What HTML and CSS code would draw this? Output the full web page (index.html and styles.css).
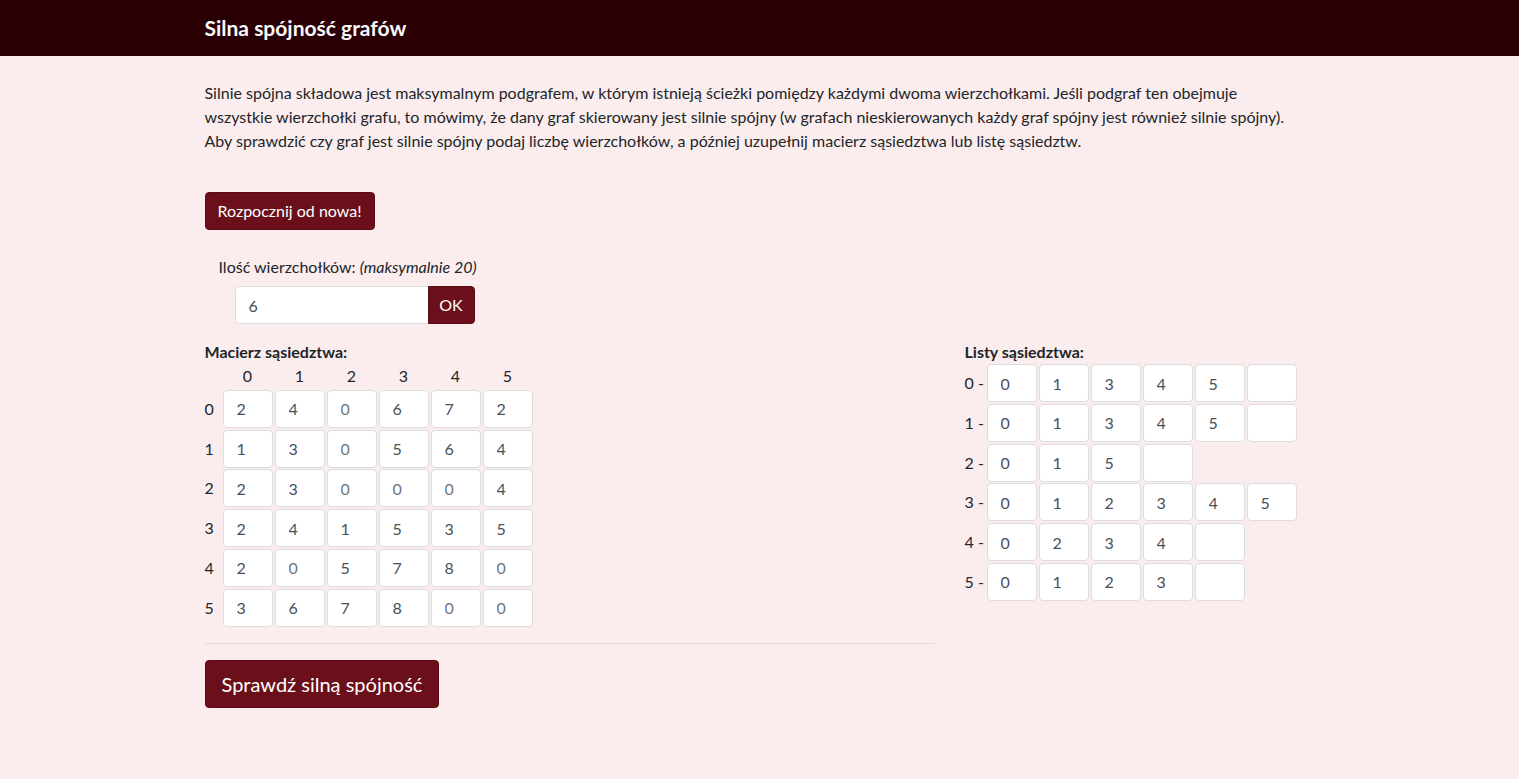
FILE: index.html
```html
<!DOCTYPE html>
<html lang="pl">
<head>
<meta charset="utf-8">
<title>Silna spójność grafów</title>
<link rel="stylesheet" href="styles.css">
</head>
<body>
<header class="topbar">
  <div class="container">
    <h1 class="brand">Silna spójność grafów</h1>
  </div>
</header>
<main class="container content">
  <p class="intro">Silnie spójna składowa jest maksymalnym podgrafem, w którym istnieją ścieżki pomiędzy każdymi dwoma wierzchołkami. Jeśli podgraf ten obejmuje<br>wszystkie wierzchołki grafu, to mówimy, że dany graf skierowany jest silnie spójny (w grafach nieskierowanych każdy graf spójny jest również silnie spójny).<br>Aby sprawdzić czy graf jest silnie spójny podaj liczbę wierzchołków, a później uzupełnij macierz sąsiedztwa lub listę sąsiedztw.</p>

  <button class="btn btn-reset">Rozpocznij od nowa!</button>

  <div class="count-form">
    <label class="count-label">Ilość wierzchołków: <em>(maksymalnie 20)</em></label>
    <div class="input-group">
      <input class="count-input" value="6">
      <button class="btn btn-ok">OK</button>
    </div>
  </div>

  <div class="row">
    <section class="col-matrix">
      <h2 class="sec-title">Macierz sąsiedztwa:</h2>
      <div class="matrix">
        <span></span><span class="head">0</span><span class="head">1</span><span class="head">2</span><span class="head">3</span><span class="head">4</span><span class="head">5</span>

        <span class="rlabel">0</span><input class="cell" value="2"><input class="cell" value="4"><input class="cell" placeholder="0"><input class="cell" value="6"><input class="cell" value="7"><input class="cell" value="2">
        <span class="rlabel">1</span><input class="cell" value="1"><input class="cell" value="3"><input class="cell" placeholder="0"><input class="cell" value="5"><input class="cell" value="6"><input class="cell" value="4">
        <span class="rlabel">2</span><input class="cell" value="2"><input class="cell" value="3"><input class="cell" placeholder="0"><input class="cell" placeholder="0"><input class="cell" placeholder="0"><input class="cell" value="4">
        <span class="rlabel">3</span><input class="cell" value="2"><input class="cell" value="4"><input class="cell" value="1"><input class="cell" value="5"><input class="cell" value="3"><input class="cell" value="5">
        <span class="rlabel">4</span><input class="cell" value="2"><input class="cell" placeholder="0"><input class="cell" value="5"><input class="cell" value="7"><input class="cell" value="8"><input class="cell" placeholder="0">
        <span class="rlabel">5</span><input class="cell" value="3"><input class="cell" value="6"><input class="cell" value="7"><input class="cell" value="8"><input class="cell" placeholder="0"><input class="cell" placeholder="0">
      </div>
      <hr class="divider">
      <button class="btn btn-lg">Sprawdź silną spójność</button>
    </section>

    <section class="col-lists">
      <h2 class="sec-title">Listy sąsiedztwa:</h2>
      <div class="lists">
        <div class="lrow"><span class="llabel">0 -</span><input class="cell" value="0"><input class="cell" value="1"><input class="cell" value="3"><input class="cell" value="4"><input class="cell" value="5"><input class="cell" value=""></div>
        <div class="lrow"><span class="llabel">1 -</span><input class="cell" value="0"><input class="cell" value="1"><input class="cell" value="3"><input class="cell" value="4"><input class="cell" value="5"><input class="cell" value=""></div>
        <div class="lrow"><span class="llabel">2 -</span><input class="cell" value="0"><input class="cell" value="1"><input class="cell" value="5"><input class="cell" value=""></div>
        <div class="lrow"><span class="llabel">3 -</span><input class="cell" value="0"><input class="cell" value="1"><input class="cell" value="2"><input class="cell" value="3"><input class="cell" value="4"><input class="cell" value="5"></div>
        <div class="lrow"><span class="llabel">4 -</span><input class="cell" value="0"><input class="cell" value="2"><input class="cell" value="3"><input class="cell" value="4"><input class="cell" value=""></div>
        <div class="lrow"><span class="llabel">5 -</span><input class="cell" value="0"><input class="cell" value="1"><input class="cell" value="2"><input class="cell" value="3"><input class="cell" value=""></div>
      </div>
    </section>
  </div>
</main>
</body>
</html>
```
FILE: styles.css
```css
* { box-sizing: border-box; }

html, body {
  margin: 0;
  padding: 0;
}

body {
  background: #fbeded;
  color: #212529;
  font-family: Lato, "Open Sans", "Noto Sans", sans-serif;
  font-size: 16px;
  line-height: 24px;
  min-height: 779px;
}

.container {
  width: 1110px;
  margin: 0 auto;
}

.topbar {
  background: #2a0005;
  height: 56px;
  display: flex;
  align-items: center;
}

.brand {
  margin: 0;
  color: #f8f9fa;
  font-size: 21px;
  font-weight: 700;
  line-height: 30px;
}

.content {
  padding-top: 25px;
}

.intro {
  margin: 0 0 39px;
  white-space: nowrap;
}

.btn {
  font-family: inherit;
  font-size: 16px;
  line-height: 24px;
  padding: 6px 12px;
  color: #fff;
  background: #6b0f1a;
  border: 1px solid #5a0c15;
  border-radius: 4px;
  cursor: pointer;
}

.btn-reset {
  display: block;
  height: 38px;
}

.count-form {
  margin-top: 25px;
}

.count-label {
  display: block;
  padding-left: 14px;
}

.input-group {
  display: flex;
  margin: 7px 0 0 30px;
  height: 38px;
}

.count-input {
  width: 193px;
  height: 38px;
  padding: 0 13px;
  font-family: inherit;
  font-size: 16px;
  color: #495057;
  background: #fff;
  border: 1px solid #ddd;
  border-right: none;
  border-radius: 4px 0 0 4px;
}

.btn-ok {
  width: 47px;
  height: 38px;
  padding: 0;
  border-radius: 0 4px 4px 0;
}

.row {
  display: flex;
  gap: 30px;
  margin-top: 16px;
}

.col-matrix {
  width: 730px;
  flex: none;
}

.col-lists {
  flex: 1;
}

.sec-title {
  margin: 0;
  font-size: 16px;
  font-weight: 700;
  line-height: 24px;
}

.matrix {
  display: grid;
  grid-template-columns: 16px repeat(6, 50px);
  grid-template-rows: 24px repeat(6, 38px);
  column-gap: 2px;
  row-gap: 1.8px;
}

.matrix .head {
  text-align: center;
  line-height: 24px;
}

.rlabel {
  display: flex;
  align-items: center;
}

.cell {
  width: 50px;
  height: 38px;
  padding: 0 13px;
  font-family: inherit;
  font-size: 16px;
  color: #495057;
  background: #fff;
  border: 1px solid #ddd;
  border-radius: 4px;
  margin: 0;
}

.cell::placeholder {
  color: #6c757d;
  opacity: 1;
}

.divider {
  margin: 16px 0;
  border: 0;
  border-top: 1px solid #e8d8da;
}

.btn-lg {
  font-size: 20px;
  line-height: 30px;
  padding: 8px 16px;
  height: 48px;
}

.lists {
  display: flex;
  flex-direction: column;
  gap: 1.8px;
}

.lrow {
  display: flex;
  align-items: center;
  gap: 2px;
}

.llabel {
  width: 21px;
  flex: none;
  margin-right: -1px;
}
```
